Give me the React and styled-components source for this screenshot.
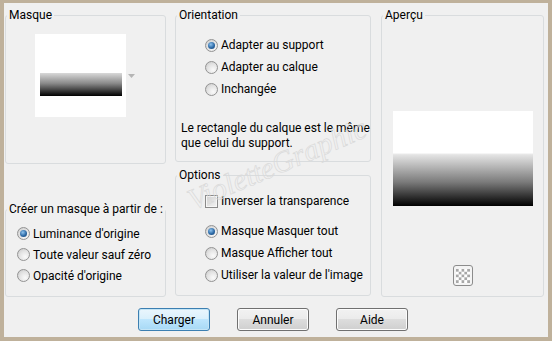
import React from 'react';
import styled, { createGlobalStyle } from 'styled-components';

const GlobalStyle = createGlobalStyle`
  body {
    margin: 0;
    font-family: Roboto, "Liberation Sans", sans-serif;
    font-size: 12px;
    color: #000;
  }
`;

const Frame = styled.div`
  position: relative;
  width: 552px;
  height: 341px;
  box-sizing: border-box;
  border: solid #bfb19b;
  border-width: 3px 4px 4px 4px;
  background: #f0f0f0;
  padding: 5px 3px 0 1px;
  overflow: hidden;
`;

const Columns = styled.div`
  display: grid;
  grid-template-columns: 161px 196px 164px;
  column-gap: 9px;
`;

const Column = styled.div`
  display: flex;
  flex-direction: column;
  margin-left: ${(p) => p.$shift || 0}px;
`;

const Group = styled.fieldset`
  margin: ${(p) => p.$top || 0}px 0 0 0;
  padding: 0;
  min-width: 0;
  height: ${(p) => p.$h}px;
  box-sizing: border-box;
  border: 1px solid #d9dcde;
  border-radius: 3px;
`;

const Legend = styled.legend`
  margin-left: 1px;
  padding: 0 2px;
  line-height: 14px;
  font-size: 12px;
  white-space: nowrap;
`;

const Inner = styled.div`
  display: flex;
  flex-direction: column;
  align-items: ${(p) => p.$align || 'stretch'};
  padding: ${(p) => p.$pad};
`;

const Thumb = styled.div`
  position: relative;
  width: 91px;
  height: 83px;
  background: #fff;
  box-sizing: border-box;
  padding: 39px 0 0 5px;
`;

const MaskBar = styled.div`
  width: 82px;
  height: 23px;
  background: linear-gradient(#d9d9d9, #8a8a8a 45%, #000);
`;

const DropArrow = styled.svg`
  position: absolute;
  left: 93px;
  top: 40px;
`;

const Row = styled.label`
  display: flex;
  align-items: center;
  height: ${(p) => p.$h || 22}px;
  gap: 3px;
  white-space: nowrap;
`;

const Radio = styled.span`
  width: 13px;
  height: 13px;
  box-sizing: border-box;
  border-radius: 50%;
  border: 1px solid #939393;
  background: radial-gradient(circle at 65% 70%, #fafafa 0%, #e2e2e2 55%, #c4c4c4 100%);
  display: flex;
  align-items: center;
  justify-content: center;
  flex: none;

  &::after {
    content: '';
    display: ${(p) => (p.$on ? 'block' : 'none')};
    width: 7px;
    height: 7px;
    border-radius: 50%;
    background: radial-gradient(circle at 40% 35%, #8fc3ee 0%, #2d6aa6 55%, #153d6b 100%);
  }
`;

const Check = styled.span`
  width: 13px;
  height: 13px;
  box-sizing: border-box;
  border: 1px solid #8a8a8a;
  background: linear-gradient(135deg, #cfcfcf, #f4f4f4);
  box-shadow: inset 0 0 0 1px #f6f6f6;
  flex: none;
`;

const Note = styled.p`
  margin: 21px 0 0 5px;
  line-height: 15px;
  white-space: nowrap;
`;

const Preview = styled.div`
  width: 140px;
  height: 95px;
  background: linear-gradient(#fff 0%, #fff 44%, #e4e4e4 46%, #7a7a7a 75%, #000 100%);
`;

const CheckerButton = styled.div`
  margin-top: 59px;
  width: 20px;
  height: 21px;
  box-sizing: border-box;
  border: 1px solid #8c8c8c;
  border-radius: 3px;
  background: #f4f4f4;
  display: flex;
  align-items: center;
  justify-content: center;
`;

const Buttons = styled.div`
  display: flex;
  gap: 27px;
  margin-top: 11px;
  padding-left: 133px;
`;

const Button = styled.button`
  width: 72px;
  height: 23px;
  padding: 0;
  font-family: inherit;
  font-size: 12px;
  color: #000;
  border-radius: 3px;
  border: 1px solid ${(p) => (p.$primary ? '#3c7fb1' : '#707070')};
  background: ${(p) =>
    p.$primary
      ? 'linear-gradient(#eaf6fd, #d9f0fc 50%, #bee6fd 50%, #a7d9f5)'
      : 'linear-gradient(#f2f2f2, #ebebeb 50%, #dddddd 50%, #cfcfcf)'};
  box-shadow: inset 0 0 0 1px ${(p) => (p.$primary ? '#c4e5f6' : '#fcfcfc')};
`;

const Watermark = styled.div`
  position: absolute;
  left: 158px;
  top: 146px;
  width: 230px;
  line-height: 30px;
  text-align: center;
  white-space: nowrap;
  font-family: "Liberation Serif", serif;
  font-style: italic;
  font-size: 30px;
  color: transparent;
  -webkit-text-stroke: 0.7px #dadada;
  transform: rotate(-23deg);
  pointer-events: none;
`;

const RadioRow = ({ on, h, children }) => (
  <Row $h={h}>
    <Radio $on={on} />
    {children}
  </Row>
);

const Checker = () => (
  <svg width="14" height="14" viewBox="0 0 5 5">
    {[0, 1, 2, 3, 4].map((y) =>
      [0, 1, 2, 3, 4].map((x) => (
        <rect key={`${x}-${y}`} x={x} y={y} width="1" height="1" fill={(x + y) % 2 ? '#fff' : '#a8a8a8'} />
      ))
    )}
  </svg>
);

export default function App() {
  return (
    <Frame>
      <GlobalStyle />
      <Columns>
        <Column>
          <Group $h={156}>
            <Legend>Masque</Legend>
            <Inner $pad="12px 0 0 29px">
              <Thumb>
                <MaskBar />
                <DropArrow width="7" height="4" viewBox="0 0 7 4">
                  <path d="M0 0h7L3.5 4z" fill="#b5b5b5" />
                </DropArrow>
              </Thumb>
            </Inner>
          </Group>
          <Group $h={95} $top={38}>
            <Legend>Créer un masque à partir de :</Legend>
            <Inner $pad="7px 0 0 11px">
              <RadioRow on h={21}>Luminance d'origine</RadioRow>
              <RadioRow h={21}>Toute valeur sauf zéro</RadioRow>
              <RadioRow h={21}>Opacité d'origine</RadioRow>
            </Inner>
          </Group>
        </Column>

        <Column>
          <Group $h={154}>
            <Legend>Orientation</Legend>
            <Inner $pad="12px 0 0 29px">
              <RadioRow on>Adapter au support</RadioRow>
              <RadioRow>Adapter au calque</RadioRow>
              <RadioRow>Inchangée</RadioRow>
            </Inner>
            <Note>
              Le rectangle du calque est le même
              <br />
              que celui du support.
            </Note>
          </Group>
          <Group $h={128} $top={6}>
            <Legend>Options</Legend>
            <Inner $pad="8px 0 0 29px">
              <Row>
                <Check />
                Inverser la transparence
              </Row>
              <Row $h={8} />
              <RadioRow on>Masque Masquer tout</RadioRow>
              <RadioRow>Masque Afficher tout</RadioRow>
              <RadioRow>Utiliser la valeur de l'image</RadioRow>
            </Inner>
          </Group>
        </Column>

        <Column $shift={1}>
          <Group $h={289}>
            <Legend>Aperçu</Legend>
            <Inner $pad="89px 0 0 0" $align="center">
              <Preview />
              <CheckerButton>
                <Checker />
              </CheckerButton>
            </Inner>
          </Group>
        </Column>
      </Columns>

      <Buttons>
        <Button $primary>Charger</Button>
        <Button>Annuler</Button>
        <Button>Aide</Button>
      </Buttons>

      <Watermark>VioletteGraphic</Watermark>
    </Frame>
  );
}
